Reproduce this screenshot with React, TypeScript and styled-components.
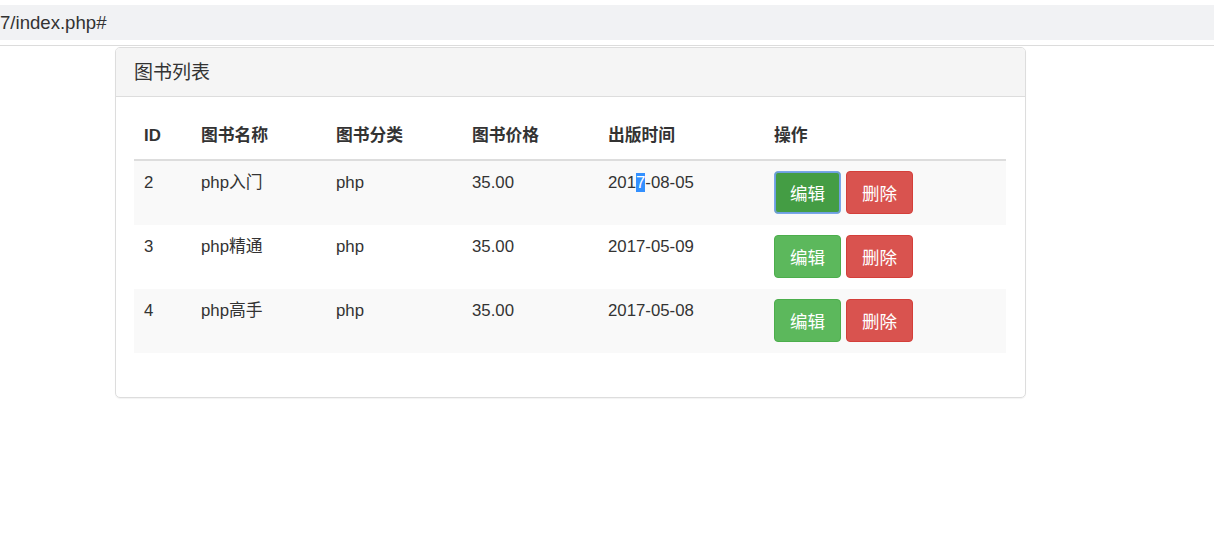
import React from 'react';
import styled, { createGlobalStyle } from 'styled-components';

const GlobalStyle = createGlobalStyle`
  html, body {
    margin: 0;
    padding: 0;
    background: #fff;
  }
  body {
    font-family: "Liberation Sans", Arial, "Noto Sans CJK SC", sans-serif;
    color: #333;
  }
`;

const Page = styled.div`
  width: 1214px;
  height: 537px;
  overflow: hidden;
  padding-top: 5px;
  box-sizing: border-box;
`;

const AddressBar = styled.div`
  height: 35px;
  background: #f1f2f4;
  display: flex;
  align-items: center;
  font-size: 18.6px;
  color: #333;
`;

const Divider = styled.div`
  height: 1px;
  background: #dcdcdc;
  margin-top: 5px;
`;

const Panel = styled.section`
  width: 911px;
  margin-left: 115px;
  margin-top: 1px;
  border: 1px solid #ddd;
  border-radius: 5px;
  box-shadow: 0 1px 1px rgba(0, 0, 0, 0.05);
  box-sizing: border-box;
  overflow: hidden;
`;

const PanelHeading = styled.header`
  height: 49px;
  background: #f5f5f5;
  border-bottom: 1px solid #ddd;
  display: flex;
  align-items: center;
  padding: 0 18px 3px;
  font-size: 19px;
  color: #333;
  box-sizing: border-box;
`;

const PanelBody = styled.div`
  padding: 18px 18px 20px;
`;

const Table = styled.table`
  width: 872px;
  table-layout: fixed;
  border-collapse: collapse;
  border-spacing: 0;
  font-size: 16.8px;
  line-height: 24px;
  margin-bottom: 24px;
`;

const HeadCell = styled.th<{ $w: number }>`
  width: ${p => p.$w}px;
  text-align: left;
  font-weight: bold;
  padding: 9px 10px 11px;
  border-bottom: 2px solid #ddd;
  vertical-align: bottom;
  box-sizing: border-box;
`;

const Row = styled.tr<{ $striped: boolean }>`
  background: ${p => (p.$striped ? '#f9f9f9' : '#fff')};
  & + & td {
    border-top: 1px solid #ddd;
  }
`;

const Cell = styled.td`
  padding: 10px;
  vertical-align: top;
  height: 44px;
  white-space: nowrap;
`;

const Actions = styled.div`
  display: flex;
  gap: 5px;
`;

const Button = styled.button<{ $kind: 'edit' | 'delete'; $active?: boolean }>`
  width: 67px;
  height: 43px;
  border-radius: 4px;
  font-family: inherit;
  font-size: 17.5px;
  color: #fff;
  cursor: pointer;
  padding: 0;
  box-sizing: border-box;
  background: ${p =>
    p.$kind === 'edit' ? (p.$active ? '#449d44' : '#5cb85c') : '#d9534f'};
  border: 1px solid
    ${p => (p.$kind === 'edit' ? (p.$active ? '#7aa7e8' : '#4cae4c') : '#d43f3a')};
  ${p => p.$active && 'box-shadow: inset 0 0 0 1px #6d9fe0;'}
`;

const Selected = styled.span`
  background: #3390ff;
  color: #fff;
`;

const columns = [
  { label: 'ID', w: 57 },
  { label: '图书名称', w: 135 },
  { label: '图书分类', w: 136 },
  { label: '图书价格', w: 136 },
  { label: '出版时间', w: 166 },
  { label: '操作', w: 242 },
];

const books = [
  { id: 2, name: 'php入门', cat: 'php', price: '35.00', date: '2017-08-05' },
  { id: 3, name: 'php精通', cat: 'php', price: '35.00', date: '2017-05-09' },
  { id: 4, name: 'php高手', cat: 'php', price: '35.00', date: '2017-05-08' },
];

const App = () => (
  <Page>
    <GlobalStyle />
    <AddressBar>7/index.php#</AddressBar>
    <Divider />
    <Panel>
      <PanelHeading>图书列表</PanelHeading>
      <PanelBody>
        <Table>
          <thead>
            <tr>
              {columns.map(c => (
                <HeadCell key={c.label} $w={c.w}>
                  {c.label}
                </HeadCell>
              ))}
            </tr>
          </thead>
          <tbody>
            {books.map((b, i) => (
              <Row key={b.id} $striped={i % 2 === 0}>
                <Cell>{b.id}</Cell>
                <Cell>{b.name}</Cell>
                <Cell>{b.cat}</Cell>
                <Cell>{b.price}</Cell>
                <Cell>
                  {i === 0 ? (
                    <>
                      201<Selected>7</Selected>-08-05
                    </>
                  ) : (
                    b.date
                  )}
                </Cell>
                <Cell>
                  <Actions>
                    <Button $kind="edit" $active={i === 0}>
                      编辑
                    </Button>
                    <Button $kind="delete">删除</Button>
                  </Actions>
                </Cell>
              </Row>
            ))}
          </tbody>
        </Table>
      </PanelBody>
    </Panel>
  </Page>
);

export default App;
